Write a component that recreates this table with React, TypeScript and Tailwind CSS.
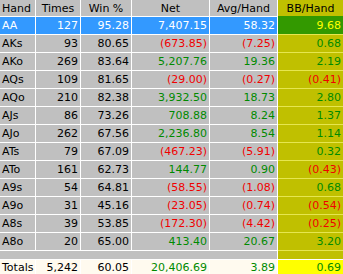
import React from 'react';

type Row = [string, string, string, string, string, string];

const rows: Row[] = [
  ['AA', '127', '95.28', '7,407.15', '58.32', '9.68'],
  ['AKs', '93', '80.65', '(673.85)', '(7.25)', '0.68'],
  ['AKo', '269', '83.64', '5,207.76', '19.36', '2.19'],
  ['AQs', '109', '81.65', '(29.00)', '(0.27)', '(0.41)'],
  ['AQo', '210', '82.38', '3,932.50', '18.73', '2.80'],
  ['AJs', '86', '73.26', '708.88', '8.24', '1.37'],
  ['AJo', '262', '67.56', '2,236.80', '8.54', '1.14'],
  ['ATs', '79', '67.09', '(467.23)', '(5.91)', '0.32'],
  ['ATo', '161', '62.73', '144.77', '0.90', '(0.43)'],
  ['A9s', '54', '64.81', '(58.55)', '(1.08)', '0.68'],
  ['A9o', '31', '45.16', '(23.05)', '(0.74)', '(0.54)'],
  ['A8s', '39', '53.85', '(172.30)', '(4.42)', '(0.25)'],
  ['A8o', '20', '65.00', '413.40', '20.67', '3.20'],
];

const cols = 'grid grid-cols-[35px_44px_50px_77px_67px_65px] gap-x-px';
const tone = (v: string) => (v.startsWith('(') ? 'text-[#f00000]' : 'text-[#008a00]');

const App: React.FC = () => {
  return (
    <div
      className="w-[343px] h-[274px] bg-white flex flex-col gap-y-px text-[11px] leading-none text-black overflow-hidden"
      style={{ fontFamily: '"DejaVu Sans", Verdana, sans-serif' }}
    >
      {/* Header */}
      <div className={`${cols} h-[16px] shrink-0`}>
        <div className="bg-[#c0c0c0] flex items-center pl-[2px]">Hand</div>
        <div className="bg-[#c0c0c0] flex items-center justify-center">Times</div>
        <div className="bg-[#c0c0c0] flex items-center justify-center">Win %</div>
        <div className="bg-[#c0c0c0] flex items-center justify-center">Net</div>
        <div className="bg-[#c0c0c0] flex items-center justify-center">Avg/Hand</div>
        <div className="bg-[#c0c000] flex items-center justify-center">BB/Hand</div>
      </div>

      {/* Rows */}
      {rows.map((r, i) => {
        const sel = i === 0;
        const cell = sel ? 'bg-[#3399ff] text-white' : 'bg-[#c0c0c0]';
        return (
          <div key={r[0]} className={`${cols} h-[17px] shrink-0`}>
            <div className={`${cell} flex items-center pl-[2px]`}>{r[0]}</div>
            <div className={`${cell} flex items-center justify-end pr-[2px]`}>{r[1]}</div>
            <div className={`${cell} flex items-center justify-end pr-[2px]`}>{r[2]}</div>
            <div className={`${cell} ${sel ? '' : tone(r[3])} flex items-center justify-end pr-[2px]`}>{r[3]}</div>
            <div className={`${cell} ${sel ? '' : tone(r[4])} flex items-center justify-end pr-[2px]`}>{r[4]}</div>
            <div
              className={`${
                sel ? 'bg-[#339900] text-[#ffff00]' : `bg-[#c0c000] ${tone(r[5])}`
              } flex items-center justify-end pr-[2px] border-t ${i === 0 ? 'border-transparent' : 'border-[#e6e650]'} -mt-px h-[18px]`}
            >
              {r[5]}
            </div>
          </div>
        );
      })}

      {/* Spacer row */}
      <div className={`${cols} h-[8px] shrink-0`}>
        <div className="col-span-5 bg-[#c0c0c0]" />
        <div className="bg-[#c0c000] -mt-px h-[9px] border-t border-[#e6e650]" />
      </div>

      {/* Totals */}
      <div className={`${cols} h-[14px] shrink-0 bg-white`}>
        <div className="bg-[#fffaef] flex items-center pl-[2px]">Totals</div>
        <div className="bg-[#fffaef] flex items-center justify-end pr-[2px]">5,242</div>
        <div className="bg-[#fffaef] flex items-center justify-end pr-[2px]">60.05</div>
        <div className="bg-[#fffaef] text-[#008a00] flex items-center justify-end pr-[2px]">20,406.69</div>
        <div className="bg-[#fffaef] text-[#008a00] flex items-center justify-end pr-[2px]">3.89</div>
        <div className="bg-[#ffff00] text-[#008a00] flex items-center justify-end pr-[2px]">0.69</div>
      </div>
    </div>
  );
};

export default App;
